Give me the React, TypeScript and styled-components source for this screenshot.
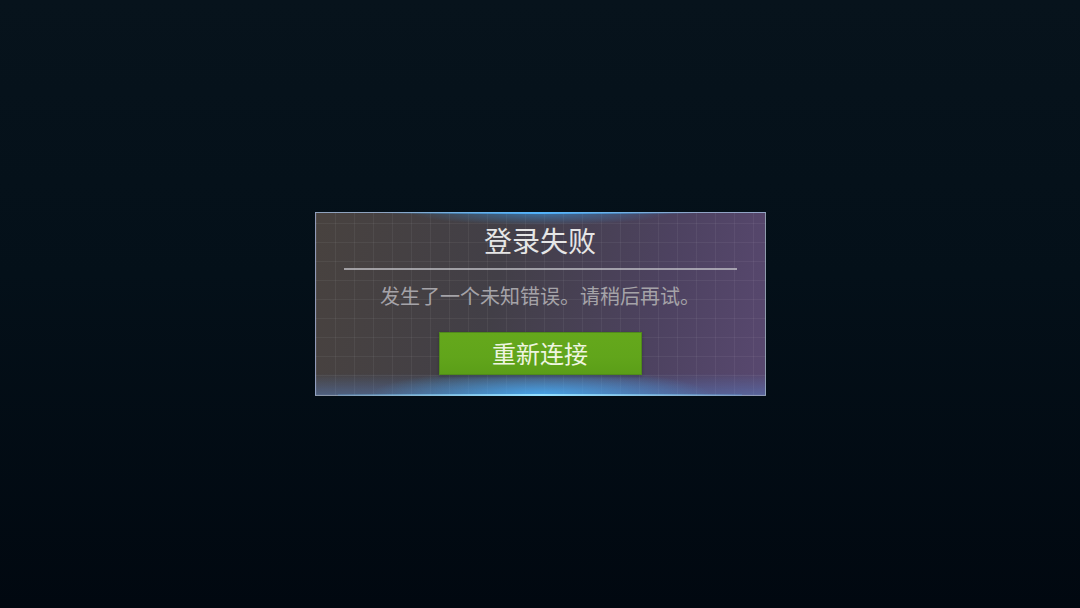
import styled, { createGlobalStyle } from "styled-components";

const GlobalStyle = createGlobalStyle`
  html, body {
    margin: 0;
    padding: 0;
    height: 100%;
  }
  body {
    background: #030c14;
    font-family: "Noto Sans CJK SC", "Noto Sans", sans-serif;
  }
  #root {
    height: 100%;
  }
`;

const Screen = styled.div`
  box-sizing: border-box;
  width: 100%;
  height: 100vh;
  display: flex;
  align-items: center;
  justify-content: center;
  padding-bottom: 1px;
  background: linear-gradient(180deg, #07131c 0%, #041019 45%, #010810 100%);
`;

const Dialog = styled.div`
  box-sizing: border-box;
  position: relative;
  width: 451px;
  height: 184px;
  display: flex;
  flex-direction: column;
  align-items: center;
  padding: 8px 28px 0;
  border: 1px solid rgba(170, 190, 215, 0.7);
  background:
    radial-gradient(ellipse 170px 26px at 50% 100%, rgba(70, 180, 255, 0.8), rgba(70, 180, 255, 0) 100%),
    radial-gradient(ellipse 130px 12px at 50% 0%, rgba(60, 160, 240, 0.5), rgba(60, 160, 240, 0) 100%),
    linear-gradient(0deg, rgba(90, 140, 220, 0.4) 0%, rgba(90, 140, 220, 0) 12%),
    repeating-linear-gradient(90deg, rgba(255, 255, 255, 0.05) 0 1px, transparent 1px 19px),
    repeating-linear-gradient(0deg, rgba(255, 255, 255, 0.05) 0 1px, transparent 1px 19px),
    linear-gradient(100deg, #48423f 0%, #423f47 40%, #4d4260 75%, #58486f 100%);

  &::before,
  &::after {
    content: "";
    position: absolute;
    height: 2px;
  }
  &::before {
    top: -1px;
    left: 15%;
    right: 15%;
    background: linear-gradient(90deg, rgba(90, 170, 230, 0), rgba(80, 180, 255, 0.95) 50%, rgba(90, 170, 230, 0));
  }
  &::after {
    bottom: -1px;
    left: 5%;
    right: 5%;
    background: linear-gradient(90deg, rgba(90, 170, 230, 0.2), rgba(150, 225, 255, 1) 50%, rgba(90, 170, 230, 0.2));
  }
`;

const Title = styled.h1`
  margin: 0;
  font-size: 28px;
  line-height: 38px;
  font-weight: 400;
  color: #e6e6e6;
`;

const Divider = styled.div`
  align-self: stretch;
  height: 2px;
  margin-top: 9px;
  background: rgba(200, 200, 205, 0.7);
`;

const Message = styled.p`
  margin: 13px 0 0;
  font-size: 20px;
  line-height: 26px;
  color: #a5a3a8;
`;

const RetryButton = styled.button`
  box-sizing: border-box;
  width: 203px;
  height: 43px;
  margin-top: 23px;
  padding: 0;
  border: 1px solid #4f8a1a;
  background: linear-gradient(180deg, #65a81c 0%, #61a51b 60%, #5b9e18 100%);
  color: #eef5e0;
  font-family: "Noto Sans CJK SC", "Noto Sans", sans-serif;
  font-size: 24px;
  line-height: 1;
  cursor: pointer;
  box-shadow: 0 1px 3px rgba(0, 0, 0, 0.25);
`;

export default function App() {
  return (
    <>
      <GlobalStyle />
      <Screen>
        <Dialog>
          <Title>登录失败</Title>
          <Divider />
          <Message>发生了一个未知错误。请稍后再试。</Message>
          <RetryButton>重新连接</RetryButton>
        </Dialog>
      </Screen>
    </>
  );
}
